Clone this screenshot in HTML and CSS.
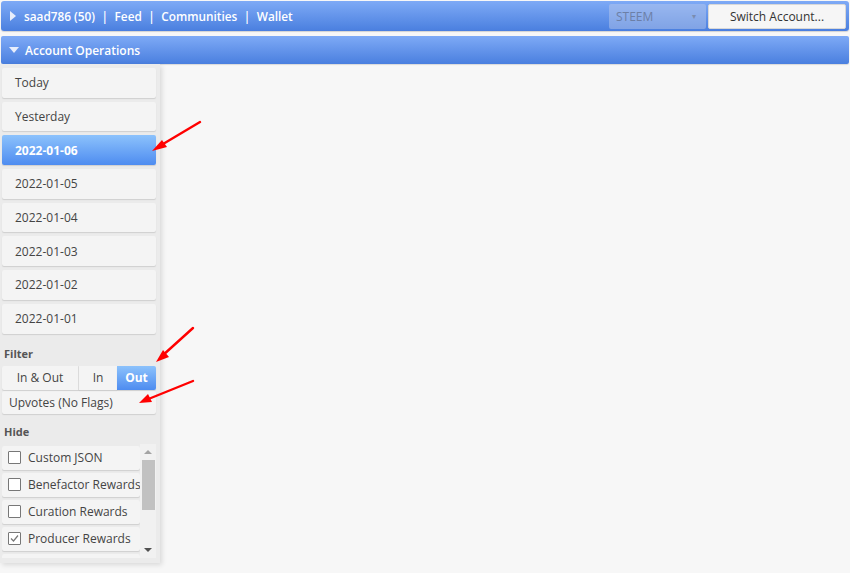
FILE: index.html
```html
<!DOCTYPE html>
<html>
<head>
<meta charset="utf-8">
<link rel="stylesheet" href="styles.css">
</head>
<body>
<div class="topbar">
  <span class="tri-right"></span>
  <nav class="nav">
    <span>saad786 (50)</span><span class="sep">|</span><span>Feed</span><span class="sep">|</span><span>Communities</span><span class="sep">|</span><span>Wallet</span>
  </nav>
  <div class="select">STEEM<span class="caret">▾</span></div>
  <button class="switch">Switch Account...</button>
</div>
<div class="opsbar">
  <span class="tri-down"></span>
  <span class="opstitle">Account Operations</span>
</div>
<div class="layout">
  <aside class="sidebar">
    <div class="dates">
      <div class="date">Today</div>
      <div class="date">Yesterday</div>
      <div class="date active">2022-01-06</div>
      <div class="date">2022-01-05</div>
      <div class="date">2022-01-04</div>
      <div class="date">2022-01-03</div>
      <div class="date">2022-01-02</div>
      <div class="date">2022-01-01</div>
    </div>
    <div class="label filter-label">Filter</div>
    <div class="seg">
      <div class="seg-btn inout">In &amp; Out</div>
      <div class="seg-btn in">In</div>
      <div class="seg-btn out active">Out</div>
    </div>
    <div class="upvotes">Upvotes (No Flags)</div>
    <div class="label hide-label">Hide</div>
    <div class="hidebox">
      <div class="hidelist">
        <div class="hide-item"><span class="cb"></span>Custom JSON</div>
        <div class="hide-item"><span class="cb"></span>Benefactor Rewards</div>
        <div class="hide-item"><span class="cb"></span>Curation Rewards</div>
        <div class="hide-item"><span class="cb checked"><svg width="11" height="11" viewBox="0 0 11 11"><path d="M2 5.5 L4.5 8 L9 2.5" fill="none" stroke="#777" stroke-width="1.2"/></svg></span>Producer Rewards</div>
        <div class="hide-item"></div>
      </div>
      <div class="scrollbar">
        <span class="sb-up"></span>
        <span class="sb-thumb"></span>
        <span class="sb-down"></span>
      </div>
    </div>
  </aside>
  <main class="main"></main>
</div>
<svg class="arrows" width="850" height="573" viewBox="0 0 850 573">
  <g stroke="#f00" stroke-width="2.4" fill="#f00" stroke-linecap="round">
    <line x1="200" y1="122" x2="158" y2="147"/>
    <polygon points="152,151 162,140 167,147" stroke="none"/>
    <line x1="193" y1="328" x2="162" y2="356"/>
    <polygon points="156,362 163,350 169,357" stroke="none"/>
    <line x1="193" y1="381" x2="146" y2="400"/>
    <polygon points="139,403 148,394 152,402" stroke="none"/>
  </g>
</svg>
</body>
</html>
```
FILE: styles.css
```css
* { box-sizing: border-box; }
html, body { margin: 0; padding: 0; }
body {
  background: #f7f7f7;
  font-family: "Open Sans", "Liberation Sans", sans-serif;
  font-size: 12px;
  color: #444;
  width: 850px;
  height: 573px;
  overflow: hidden;
  position: relative;
}
.topbar {
  margin: 1px 1px 0 1px;
  height: 30px;
  border-radius: 3px;
  background: linear-gradient(#7eaaf6, #4a7fdf);
  display: flex;
  align-items: center;
  padding: 0 3px 0 9px;
  box-shadow: 0 1px 1px rgba(0,0,0,0.15);
}
.tri-right {
  width: 0; height: 0;
  border-top: 5px solid transparent;
  border-bottom: 5px solid transparent;
  border-left: 6px solid #e8eefb;
  margin-right: 8px;
}
.nav {
  flex: 1;
  color: #fff;
  font-weight: 600;
  font-size: 11.8px;
  display: flex;
}
.nav .sep { margin: 0 6.5px; }
.select {
  width: 97px;
  height: 25px;
  background: rgba(190, 205, 235, 0.45);
  border-radius: 2px;
  color: #6c7fa6;
  font-size: 12px;
  display: flex;
  align-items: center;
  padding: 0 7px;
  position: relative;
  margin-right: 2px;
}
.select .caret {
  position: absolute;
  right: 10px;
  top: 6px;
  font-size: 8px;
  color: #7a8cb0;
}
.switch {
  width: 138px;
  height: 25px;
  background: #f6f6f6;
  border: 1px solid #d8d8d8;
  border-radius: 2px;
  font-family: inherit;
  font-size: 12px;
  color: #333;
  padding: 0;
}
.opsbar {
  margin: 5px 1px 0 1px;
  height: 28px;
  border-radius: 2px;
  background: linear-gradient(#7eaaf6, #4a7fdf);
  display: flex;
  align-items: center;
  padding-left: 8px;
  box-shadow: 0 1px 1px rgba(0,0,0,0.12);
}
.tri-down {
  width: 0; height: 0;
  border-left: 5px solid transparent;
  border-right: 5px solid transparent;
  border-top: 6px solid #e8eefb;
  margin-right: 6px;
}
.opstitle { color: #fff; font-weight: 600; font-size: 12px; }
.layout { display: flex; }
.sidebar {
  width: 160px;
  height: 499px;
  background: #ebebeb;
  padding: 4px 2px 0 2px;
  box-shadow: 2px 2px 5px rgba(0,0,0,0.12);
}
.dates { display: flex; flex-direction: column; gap: 4px; }
.date {
  height: 29.7px;
  width: 154px;
  background: #f4f4f4;
  border-radius: 2px;
  box-shadow: 0 1px 1px rgba(0,0,0,0.12);
  display: flex;
  align-items: center;
  padding-left: 13px;
  color: #444;
}
.date.active {
  background: linear-gradient(#8cc2fc, #4e8cf0);
  color: #fff;
  font-weight: 700;
}
.label {
  font-size: 11px;
  font-weight: 700;
  color: #555;
  padding-left: 2px;
}
.filter-label { margin-top: 12px; height: 17px; }
.seg { display: flex; width: 154px; height: 24px; margin-top: 3px; }
.seg-btn {
  display: flex; align-items: center; justify-content: center;
  background: #f4f4f4;
  box-shadow: 0 1px 1px rgba(0,0,0,0.12);
  color: #444;
}
.seg .inout { width: 77px; border-right: 1px solid #e0e0e0; border-radius: 2px 0 0 2px; }
.seg .in { width: 38px; }
.seg .out { width: 39px; border-radius: 0 2px 2px 0; }
.seg-btn.active { background: linear-gradient(#8cc2fc, #4e8cf0); color: #fff; font-weight: 700; }
.upvotes {
  margin-top: 1px;
  height: 23px;
  width: 154px;
  background: #f4f4f4;
  border-radius: 2px;
  box-shadow: 0 1px 1px rgba(0,0,0,0.12);
  display: flex; align-items: center;
  padding-left: 7px;
}
.hide-label { margin-top: 10px; height: 18px; }
.hidebox { display: flex; height: 114px; overflow: hidden; margin-top: 2px; }
.hidelist { width: 138px; display: flex; flex-direction: column; gap: 3px; padding-top: 2px; overflow: hidden; }
.hide-item {
  flex: none;
  height: 24px;
  width: 138px;
  background: #f4f4f4;
  border-radius: 2px;
  box-shadow: 0 1px 1px rgba(0,0,0,0.12);
  display: flex; align-items: center;
  padding-left: 6px;
  white-space: nowrap;
  overflow: hidden;
  color: #444;
}
.cb {
  width: 13px; height: 13px;
  border: 1px solid #777;
  border-radius: 1px;
  background: #fff;
  margin-right: 7px;
  flex: none;
  display: flex; align-items: center; justify-content: center;
}
.scrollbar {
  width: 16px;
  background: #f1f1f1;
  position: relative;
  display: flex; flex-direction: column; align-items: center;
}
.sb-up {
  width: 0; height: 0; margin-top: 6px;
  border-left: 4px solid transparent; border-right: 4px solid transparent;
  border-bottom: 4px solid #a3a3a3;
}
.sb-thumb { width: 13px; height: 50px; background: #c1c1c1; margin-top: 6px; }
.sb-down {
  width: 0; height: 0; margin-top: auto; margin-bottom: 6px;
  border-left: 4px solid transparent; border-right: 4px solid transparent;
  border-top: 4px solid #505050;
}
.main { flex: 1; }
.arrows { position: absolute; left: 0; top: 0; pointer-events: none; }
```
